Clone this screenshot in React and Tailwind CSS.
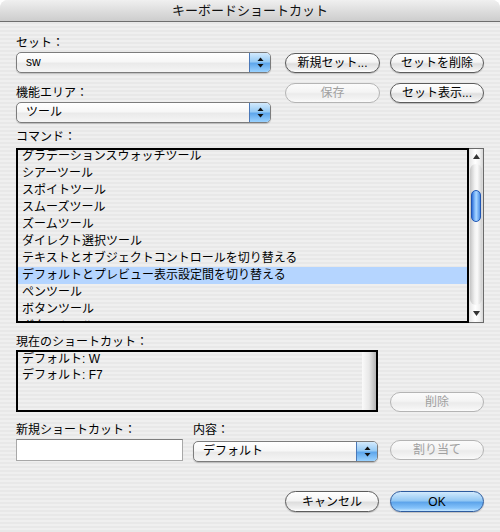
import React from "react";

const FONT = { fontFamily: '"Liberation Sans", "Noto Sans CJK JP", sans-serif' };

function Btn({ children, disabled, primary, className = "" }) {
  let cls =
    "h-[20px] rounded-full border flex items-center justify-center text-[12px] leading-none shadow-[0_1px_1px_rgba(0,0,0,0.2)] ";
  if (primary) {
    cls +=
      "border-[#2d5b9e] text-black bg-[image:linear-gradient(to_bottom,#d2eafd_0%,#93c8f4_45%,#5ea5eb_55%,#86c4fb_85%,#c6e7ff_100%)]";
  } else if (disabled) {
    cls +=
      "border-[#b4b4b4] text-[#a0a0a0] bg-[image:linear-gradient(to_bottom,#fbfbfb_0%,#f4f4f4_45%,#ebebeb_55%,#f4f4f4_85%,#fbfbfb_100%)] shadow-none";
  } else {
    cls +=
      "border-[#5c5c5c] text-black bg-[image:linear-gradient(to_bottom,#ffffff_0%,#f4f4f4_45%,#dedede_55%,#efefef_85%,#ffffff_100%)]";
  }
  return <div className={cls + " " + className}>{children}</div>;
}

function Arrows() {
  return (
    <svg width="7" height="11" viewBox="0 0 7 11">
      <path d="M3.5 0.5 L6.5 4 L0.5 4 Z" fill="#111" />
      <path d="M3.5 10.5 L6.5 7 L0.5 7 Z" fill="#111" />
    </svg>
  );
}

function Popup({ children, className = "" }) {
  return (
    <div
      className={
        "h-[21px] rounded-[5px] border border-[#7c7c7c] flex overflow-hidden shadow-[0_1px_1px_rgba(0,0,0,0.2)] bg-[image:linear-gradient(to_bottom,#ffffff_0%,#f7f7f7_45%,#eaeaea_55%,#f5f5f5_100%)] " +
        className
      }
    >
      <div className="flex-1 pl-[9px] text-[12px] leading-[19px] text-black">{children}</div>
      <div className="w-[21px] border-l border-[#4a78b8] flex items-center justify-center bg-[image:linear-gradient(to_bottom,#d3eafd_0%,#97cbf5_45%,#5fa7ec_55%,#9ad2ff_100%)]">
        <Arrows />
      </div>
    </div>
  );
}

const items = [
  "グラデーションスウォッチツール",
  "シアーツール",
  "スポイトツール",
  "スムーズツール",
  "ズームツール",
  "ダイレクト選択ツール",
  "テキストとオブジェクトコントロールを切り替える",
  "デフォルトとプレビュー表示設定間を切り替える",
  "ペンツール",
  "ボタンツール",
  "ボタンツール",
];

export default function App() {
  return (
    <div className="w-[500px] h-[532px] bg-white overflow-hidden" style={FONT}>
      <div className="h-full rounded-t-[8px] overflow-hidden flex flex-col bg-[image:repeating-linear-gradient(to_bottom,#efefef_0px,#efefef_2px,#e8e8e8_2px,#e8e8e8_4px)]">
        {/* Title bar */}
        <div className="h-[22px] shrink-0 border-b border-[#6e6e6e] bg-[image:linear-gradient(to_bottom,#f0f0f0_0%,#dedede_50%,#cdcdcd_100%)] flex items-center justify-center text-[13px] text-[#111]">
          キーボードショートカット
        </div>

        <div className="flex-1 px-[16px] flex flex-col">
          {/* Top section */}
          <div className="flex">
            <div className="w-[255px] flex flex-col">
              <div className="mt-[13px] h-[16px] text-[12px] leading-[16px]">セット：</div>
              <Popup className="mt-[1px]">sw</Popup>
              <div className="mt-[12px] h-[16px] text-[12px] leading-[16px]">機能エリア：</div>
              <Popup className="mt-[1px]">ツール</Popup>
            </div>
            <div className="ml-auto w-[199px] pt-[31px] flex flex-col gap-[10px]">
              <div className="flex gap-[10px]">
                <Btn className="w-[95px]">新規セット...</Btn>
                <Btn className="w-[94px]">セットを削除</Btn>
              </div>
              <div className="flex gap-[10px]">
                <Btn disabled className="w-[95px]">保存</Btn>
                <Btn className="w-[94px]">セット表示...</Btn>
              </div>
            </div>
          </div>

          {/* Commands */}
          <div className="mt-[6px] h-[16px] text-[12px] leading-[16px]">コマンド：</div>
          <div className="mt-[3px] h-[175px] flex">
            <div className="flex-1 border-2 border-black overflow-hidden">
              <div className="-mt-[2px]">
                {items.map((t, i) => (
                  <div
                    key={i}
                    className={
                      "h-[17px] pl-[4px] text-[12px] leading-[16px] whitespace-nowrap text-black " +
                      (i === 7 ? "bg-[#b5d5ff]" : "")
                    }
                  >
                    {t}
                  </div>
                ))}
              </div>
            </div>
            <div className="w-[15px] flex flex-col border-y border-r border-[#6a6a6a] bg-[image:linear-gradient(to_right,#e4e4e4_0%,#ffffff_45%,#f2f2f2_75%,#d6d6d6_100%)]">
              <div className="h-[15px] flex items-center justify-center">
                <svg width="7" height="5" viewBox="0 0 7 5">
                  <path d="M3.5 0 L7 5 L0 5 Z" fill="#333" />
                </svg>
              </div>
              <div className="flex-1 mx-[1px] rounded-full bg-[image:linear-gradient(to_right,#c4c4c4_0%,#f2f2f2_40%,#fafafa_60%,#d0d0d0_100%)] pt-[26px] px-[1px]">
                <div className="h-[32px] rounded-full border border-[#1f56b4] bg-[image:linear-gradient(to_right,#2f6fd8_0%,#8ec5ff_40%,#a6d4ff_55%,#4b8ee6_100%)]" />
              </div>
              <div className="h-[17px] flex items-center justify-center">
                <svg width="7" height="5" viewBox="0 0 7 5">
                  <path d="M0 0 L7 0 L3.5 5 Z" fill="#333" />
                </svg>
              </div>
            </div>
          </div>

          {/* Current shortcuts */}
          <div className="mt-[11px] h-[16px] text-[12px] leading-[16px]">現在のショートカット：</div>
          <div className="flex items-end">
            <div className="w-[362px] h-[62px] border-2 border-black flex">
              <div className="flex-1 pl-[4px] -mt-[1px]">
                <div className="h-[16px] text-[12px] leading-[16px]">デフォルト: W</div>
                <div className="h-[16px] text-[12px] leading-[16px]">デフォルト: F7</div>
              </div>
              <div className="w-[14px] bg-[image:linear-gradient(to_right,#fafafa_0%,#e8e8e8_50%,#b4b4b4_100%)]" />
            </div>
            <Btn disabled className="ml-[12px] w-[94px]">削除</Btn>
          </div>

          {/* New shortcut */}
          <div className="mt-[10px] flex">
            <div className="w-[167px] flex flex-col">
              <div className="h-[16px] text-[12px] leading-[16px]">新規ショートカット：</div>
              <div className="mt-[1px] h-[22px] bg-white border border-[#a8a8a8] border-t-[#7e7e7e]" />
            </div>
            <div className="ml-[10px] w-[185px] flex flex-col">
              <div className="h-[16px] text-[12px] leading-[16px]">内容：</div>
              <Popup className="mt-[3px]">デフォルト</Popup>
            </div>
            <Btn disabled className="ml-[12px] mt-[18px] w-[94px]">割り当て</Btn>
          </div>

          {/* Bottom buttons */}
          <div className="mt-[29px] flex justify-end gap-[11px]">
            <Btn className="w-[94px] h-[21px]">キャンセル</Btn>
            <Btn primary className="w-[94px] h-[21px]">OK</Btn>
          </div>
        </div>
      </div>
    </div>
  );
}
